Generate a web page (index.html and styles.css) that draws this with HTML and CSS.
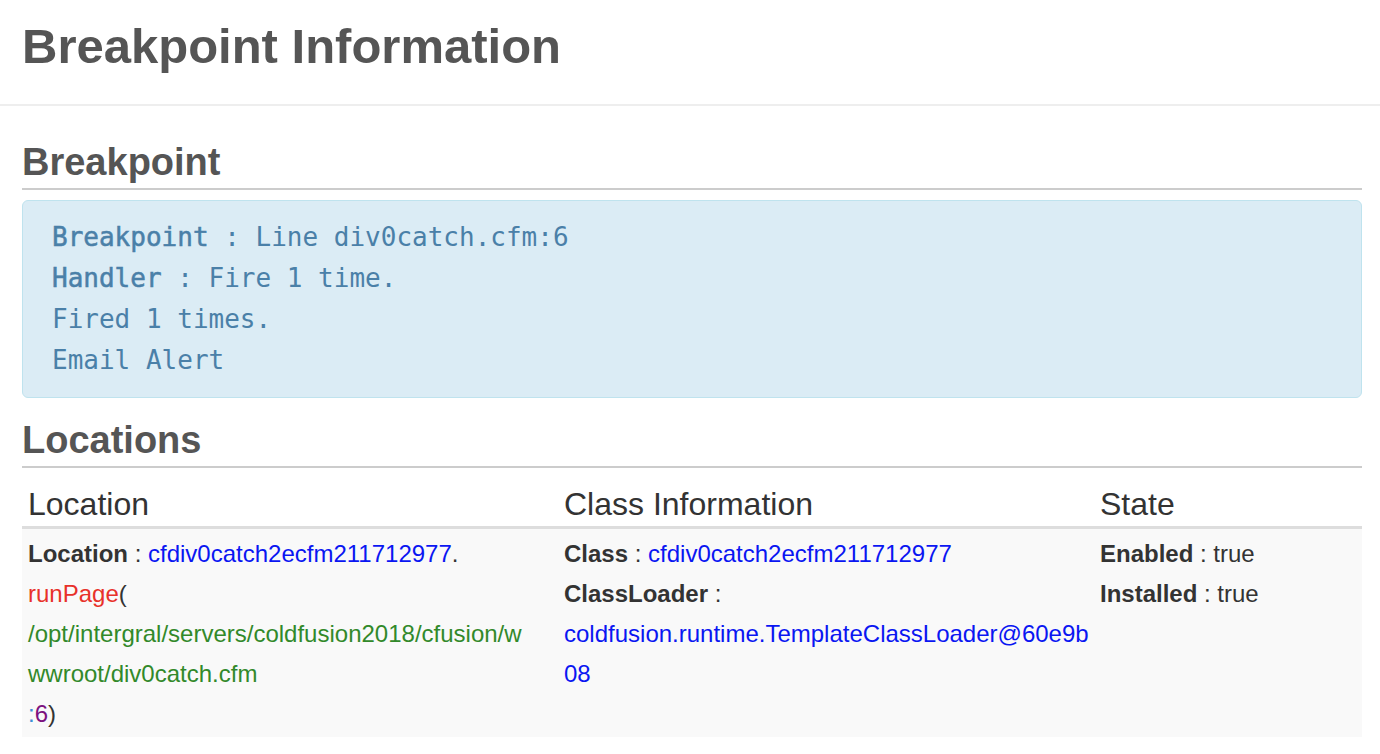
FILE: index.html
```html
<!DOCTYPE html>
<html lang="en">
<head>
<meta charset="utf-8">
<title>Breakpoint Information</title>
<link rel="stylesheet" href="styles.css">
</head>
<body>
<header class="page-header">
  <h1 class="page-title">Breakpoint Information</h1>
</header>
<main class="content">
  <h2 class="section-title">Breakpoint</h2>
  <div class="info-box">
    <div class="info-line"><span class="key">Breakpoint</span><span> : Line div0catch.cfm:6</span></div>
    <div class="info-line"><span class="key">Handler</span><span> : Fire 1 time.</span></div>
    <div class="info-line">Fired 1 times.</div>
    <div class="info-line">Email Alert</div>
  </div>

  <h2 class="section-title">Locations</h2>
  <table class="loc-table">
    <colgroup>
      <col class="col-wide">
      <col class="col-wide">
      <col class="col-narrow">
    </colgroup>
    <thead>
      <tr>
        <th>Location</th>
        <th>Class Information</th>
        <th>State</th>
      </tr>
    </thead>
    <tbody>
      <tr>
        <td>
          <div class="line"><b>Location</b> : <span class="c-blue">cfdiv0catch2ecfm211712977</span>.</div>
          <div class="line"><span class="c-red">runPage</span>(</div>
          <div class="line c-green">/opt/intergral/servers/coldfusion2018/cfusion/w<br>wwroot/div0catch.cfm</div>
          <div class="line"><span class="c-sky">:</span><span class="c-purple">6</span>)</div>
        </td>
        <td>
          <div class="line"><b>Class</b> : <span class="c-blue">cfdiv0catch2ecfm211712977</span></div>
          <div class="line"><b>ClassLoader</b> :</div>
          <div class="line c-blue nowrap">coldfusion.runtime.TemplateClassLoader@60e9b<br>08</div>
        </td>
        <td>
          <div class="line"><b>Enabled</b> : true</div>
          <div class="line"><b>Installed</b> : true</div>
        </td>
      </tr>
    </tbody>
  </table>
</main>
</body>
</html>
```
FILE: styles.css
```css
html, body {
  margin: 0;
  padding: 0;
  background: #ffffff;
}

body {
  font-family: "Liberation Sans", Arial, Helvetica, sans-serif;
  color: #333333;
}

.page-header {
  padding: 19px 22px 31px;
  border-bottom: 2px solid #eeeeee;
}

.page-title {
  margin: 0;
  font-size: 49px;
  line-height: 54px;
  font-weight: bold;
  color: #555555;
}

.content {
  padding: 0 18px 0 22px;
}

.section-title {
  margin: 34px 0 0;
  padding: 0 0 4px;
  font-size: 38px;
  line-height: 44px;
  font-weight: bold;
  color: #555555;
  border-bottom: 2px solid #cccccc;
}

.info-box {
  margin-top: 10px;
  padding: 16px 29px;
  background: #dbecf5;
  border: 1px solid #bfe3ee;
  border-radius: 6px;
  font-family: "DejaVu Sans Mono", "Liberation Mono", monospace;
  font-size: 26px;
  line-height: 41px;
  color: #4a80a8;
}

.info-line {
  white-space: pre;
}

.info-line .key {
  -webkit-text-stroke: 0.5px currentColor;
}

.info-box + .section-title {
  margin-top: 20px;
}

.loc-table {
  width: 100%;
  margin-top: 16px;
  border-collapse: collapse;
  table-layout: fixed;
}

.col-wide {
  width: 40%;
}

.col-narrow {
  width: 20%;
}

.loc-table th {
  padding: 0 6px 2px;
  text-align: left;
  font-weight: normal;
  font-size: 32px;
  line-height: 40px;
  color: #333333;
  border-bottom: 3px solid #dddddd;
}

.loc-table td {
  padding: 5px 6px 3px;
  vertical-align: top;
  background: #f9f9f9;
  font-size: 24px;
  line-height: 40px;
  color: #333333;
  word-break: break-all;
}

.line {
  display: block;
}

.nowrap {
  white-space: nowrap;
}

.line b {
  font-weight: bold;
}

.c-blue {
  color: #0a16f2;
}

.c-red {
  color: #e8312a;
}

.c-green {
  color: #32892a;
}

.c-sky {
  color: #3d8fd6;
}

.c-purple {
  color: #7c127f;
}
```
